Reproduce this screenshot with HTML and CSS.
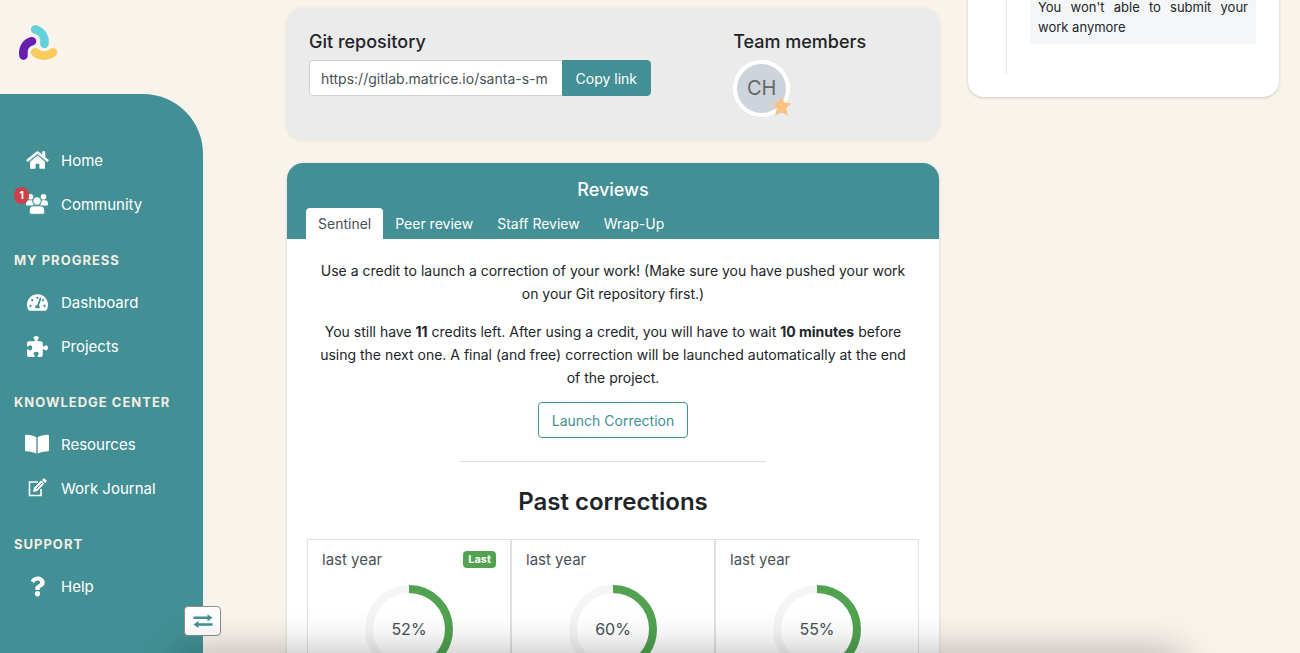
FILE: index.html
```html
<!DOCTYPE html>
<html lang="en">
<head>
<meta charset="utf-8">
<meta name="viewport" content="width=device-width, initial-scale=1">
<title>Project reviews</title>
<link rel="stylesheet" href="styles.css">
</head>
<body>
<div class="shell">
  <aside class="sidebar">
    <a class="brand" href="#" aria-label="Matrice">
      <svg class="logo" viewBox="0 0 40 38" fill="none" stroke-width="8.6" stroke-linecap="round">
        <path stroke="#63d1dc" d="M17.2 5.4C24 7.4 27.3 13.4 26.4 19.7"/>
        <path stroke="#6521ae" d="M14 17.2C7.4 19.2 4.4 24.8 5.5 31.6"/>
        <path stroke="#f9cc5f" d="M17.2 28.4C22.3 32.7 30.3 32.7 35 28.4"/>
      </svg>
    </a>
    <nav class="nav">
      <a class="nav-link" href="#"><span class="nav-icon"><svg width="23" height="20" viewBox="0 0 576 512"><path d="M280.37 148.26L96 300.11V464a16 16 0 0 0 16 16l112.06-.29a16 16 0 0 0 15.92-16V368a16 16 0 0 1 16-16h64a16 16 0 0 1 16 16v95.64a16 16 0 0 0 16 16.05L464 480a16 16 0 0 0 16-16V300L295.67 148.26a12.19 12.19 0 0 0-15.3 0zM571.6 251.47L488 182.56V44.05a12 12 0 0 0-12-12h-56a12 12 0 0 0-12 12v72.61L318.47 43a48 48 0 0 0-61 0L4.34 251.47a12 12 0 0 0-1.6 16.9l25.5 31A12 12 0 0 0 45.15 301l235.22-193.74a12.19 12.19 0 0 1 15.3 0L530.9 301a12 12 0 0 0 16.9-1.6l25.5-31a12 12 0 0 0-1.7-16.93z"/></svg></span>Home</a>
      <a class="nav-link" href="#"><span class="nav-icon"><svg width="22" height="22" viewBox="0 0 22 22"><circle cx="4.5" cy="3.8" r="2.8"/><circle cx="17.5" cy="3.8" r="2.8"/><path d="M3 7.2h2.3c.8 0 1.3.3 1.7.7-.3 2 .2 3.4 1.3 4.7H1.2C.5 12.6 0 12.1 0 11.4V10.200c0-1.700 1.300-3 3-3zM19 7.200h-2.300c-.8 0-1.300.3-1.700.7.3 2-.2 3.400-1.300 4.700h7.100c.7 0 1.200-.5 1.200-1.200v-1.200c0-1.700-1.300-3-3-3z"/><circle class="cutout" cx="11" cy="8" r="4.200"/><path class="cutout" d="M7.500 12.800h7c2.400 0 4.300 1.800 4.300 4.200v2c0 1.300-1 2.300-2.300 2.300h-11c-1.300 0-2.300-1-2.300-2.300v-2c0-2.400 1.900-4.200 4.300-4.200z"/></svg><span class="count">1</span></span>Community</a>

      <h2 class="nav-heading">My progress</h2>
      <a class="nav-link" href="#"><span class="nav-icon"><svg width="21" height="19" viewBox="0 0 576 512"><path d="M288 32C128.94 32 0 160.94 0 320c0 52.8 14.25 102.26 39.06 144.8 5.61 9.62 16.3 15.2 27.44 15.2h443c11.14 0 21.83-5.58 27.44-15.2C561.75 422.26 576 372.8 576 320c0-159.06-128.94-288-288-288zm0 64c14.71 0 26.58 10.13 30.32 23.65-1.11 2.26-2.64 4.23-3.45 6.67l-9.22 27.67c-5.13 3.49-10.97 6.01-17.64 6.01-17.67 0-32-14.33-32-32S270.33 96 288 96zM96 384c-17.67 0-32-14.33-32-32s14.33-32 32-32 32 14.33 32 32-14.33 32-32 32zm48-160c-17.67 0-32-14.33-32-32s14.33-32 32-32 32 14.33 32 32-14.33 32-32 32zm246.77-72.41l-61.33 184C343.13 347.33 352 364.54 352 384c0 11.72-3.38 22.55-8.88 32H232.88c-5.5-9.45-8.88-20.28-8.88-32 0-33.94 26.5-61.43 59.9-63.59l61.34-184.01c4.17-12.56 17.73-19.45 30.36-15.17 12.57 4.19 19.35 17.79 15.17 30.36zm14.66 57.2l15.52-46.55c3.47-1.29 7.13-2.23 11.05-2.23 17.67 0 32 14.33 32 32s-14.33 32-32 32c-11.38-.01-20.89-6.28-26.57-15.22zM480 384c-17.67 0-32-14.33-32-32s14.33-32 32-32 32 14.33 32 32-14.33 32-32 32z"/></svg></span>Dashboard</a>
      <a class="nav-link" href="#"><span class="nav-icon"><svg width="21" height="21" viewBox="0 0 512 512"><path d="M192 104.800c0-9.200-5.800-17.300-13.200-22.800C167.200 73.300 160 61.300 160 48c0-26.500 28.700-48 64-48s64 21.500 64 48c0 13.300-7.200 25.300-18.800 34c-7.400 5.500-13.200 13.600-13.200 22.800c0 12.800 10.400 23.200 23.200 23.200H336c26.500 0 48 21.500 48 48v56.800c0 12.800 10.400 23.200 23.200 23.200c9.200 0 17.300-5.800 22.800-13.200c8.700-11.600 20.700-18.800 34-18.800c26.500 0 48 28.700 48 64s-21.500 64-48 64c-13.300 0-25.300-7.200-34-18.800c-5.500-7.400-13.600-13.200-22.800-13.200c-12.800 0-23.200 10.400-23.200 23.200V464c0 26.500-21.500 48-48 48H279.200c-12.800 0-23.200-10.400-23.200-23.200c0-9.200 5.800-17.300 13.200-22.800c11.600-8.700 18.800-20.700 18.800-34c0-26.500-28.700-48-64-48s-64 21.500-64 48c0 13.300 7.200 25.300 18.800 34c7.400 5.500 13.200 13.600 13.200 22.800c0 12.800-10.400 23.200-23.200 23.200H48c-26.500 0-48-21.500-48-48V343.200C0 330.400 10.400 320 23.200 320c9.200 0 17.300 5.800 22.800 13.200C54.700 344.800 66.700 352 80 352c26.500 0 48-28.700 48-64s-21.500-64-48-64c-13.300 0-25.300 7.200-34 18.800C40.500 250.200 32.400 256 23.200 256C10.400 256 0 245.600 0 232.800V176c0-26.500 21.500-48 48-48H168.800c12.800 0 23.200-10.400 23.200-23.200z"/></svg></span>Projects</a>

      <h2 class="nav-heading">Knowledge center</h2>
      <a class="nav-link" href="#"><span class="nav-icon"><svg width="24" height="22" viewBox="0 0 576 512"><path d="M542.22 32.05c-54.8 3.11-163.72 14.43-230.96 55.59-4.64 2.84-7.27 7.89-7.27 13.17v363.87c0 11.55 12.63 18.85 23.28 13.49 69.18-34.82 169.23-44.32 218.7-46.92 16.89-.89 30.02-14.43 30.02-30.66V62.75c.01-17.71-15.35-31.74-33.77-30.7zM264.73 87.64C197.5 46.48 88.58 35.17 33.78 32.05 15.36 31.01 0 45.04 0 62.75V400.6c0 16.24 13.13 29.78 30.02 30.66 49.49 2.6 149.59 12.11 218.77 46.95 10.62 5.35 23.21-1.94 23.21-13.46V100.63c0-5.29-2.62-10.14-7.27-12.99z"/></svg></span>Resources</a>
      <a class="nav-link" href="#"><span class="nav-icon"><svg width="20" height="20" viewBox="0 0 20 20"><path d="M11 4H2.5v13.5H14V11" fill="none" stroke="currentColor" stroke-width="1.6"/><path d="M6 14l1-4.200 7.200-7.200 3.200 3.200-7.200 7.200zM15 1.900l1-1c.6-.6 1.400-.6 2 0l1.100 1.100c.6.6.6 1.400 0 2l-1 1z"/><path class="slit" d="M9 11l6-6"/></svg></span>Work Journal</a>

      <h2 class="nav-heading">Support</h2>
      <a class="nav-link" href="#"><span class="nav-icon"><svg width="15" height="21" viewBox="0 0 384 512"><path d="M202.021 0C122.202 0 70.503 32.703 29.914 91.026c-7.363 10.58-5.093 25.086 5.178 32.874l43.138 32.709c10.373 7.865 25.132 6.026 33.253-4.148 25.049-31.381 43.63-49.449 82.757-49.449 30.764 0 68.816 19.799 68.816 49.631 0 22.552-18.617 34.134-48.993 51.164-35.423 19.86-82.299 44.576-82.299 106.405V320c0 13.255 10.745 24 24 24h72.471c13.255 0 24-10.745 24-24v-5.773c0-42.86 125.268-44.645 125.268-160.627C377.504 66.256 286.902 0 202.021 0zM192 373.459c-38.196 0-69.271 31.075-69.271 69.271 0 38.195 31.075 69.27 69.271 69.27s69.271-31.075 69.271-69.271-31.075-69.27-69.271-69.27z"/></svg></span>Help</a>
    </nav>
    <button class="toggle" type="button" aria-label="Toggle sidebar">
      <svg width="20" height="16" viewBox="0 0 20 16"><path d="M.5 3.500h14V1.200L19.500 4.700l-5 3.500V6H.5zM19.500 10.300h-14V8L.5 11.500l5 3.500v-2.200h14z"/></svg>
    </button>
  </aside>

  <main class="content">
    <div class="column">
      <section class="card repo">
        <div>
          <h3 class="card-title"><label for="repo-url">Git repository</label></h3>
          <div class="copy-group">
            <input id="repo-url" class="copy-input" type="text" readonly value="https://gitlab.matrice.io/santa-s-m">
            <button class="btn btn-solid" type="button">Copy link</button>
          </div>
        </div>
        <div>
          <h3 class="card-title">Team members</h3>
          <div class="avatar">CH
            <svg class="star" viewBox="0 0 22 22"><path d="M11 1l3 6.500 7 .9-5.200 4.900 1.400 7.200L11 17.400l-6.200 3.100 1.400-7.200L1 8.400l7-.9z"/></svg>
          </div>
        </div>
      </section>

      <section class="card reviews">
        <header class="reviews-head">
          <h3 class="reviews-title">Reviews</h3>
          <div class="tabs" role="tablist">
            <button class="tab active" type="button" role="tab" aria-selected="true">Sentinel</button>
            <button class="tab" type="button" role="tab">Peer review</button>
            <button class="tab" type="button" role="tab">Staff Review</button>
            <button class="tab" type="button" role="tab">Wrap-Up</button>
          </div>
        </header>
        <div class="reviews-body">
          <div class="intro">
            <p>Use a credit to launch a correction of your work! (Make sure you have pushed your work on your Git repository first.)</p>
            <p>You still have <strong>11</strong> credits left. After using a credit, you will have to wait <strong>10 minutes</strong> before using the next one. A final (and free) correction will be launched automatically at the end of the project.</p>
          </div>
          <button class="btn btn-outline" type="button">Launch Correction</button>
          <hr>
          <h2 class="past-title">Past corrections</h2>
          <div class="results">
            <article class="result">
              <div class="result-head"><span>last year</span><span class="badge">Last</span></div>
              <div class="ring"><svg viewBox="0 0 88 88"><circle class="track" cx="44" cy="44" r="40"/><circle class="value" cx="44" cy="44" r="40" pathLength="100" stroke-dasharray="52 48"/></svg><span>52%</span></div>
            </article>
            <article class="result">
              <div class="result-head"><span>last year</span></div>
              <div class="ring"><svg viewBox="0 0 88 88"><circle class="track" cx="44" cy="44" r="40"/><circle class="value" cx="44" cy="44" r="40" pathLength="100" stroke-dasharray="60 40"/></svg><span>60%</span></div>
            </article>
            <article class="result">
              <div class="result-head"><span>last year</span></div>
              <div class="ring"><svg viewBox="0 0 88 88"><circle class="track" cx="44" cy="44" r="40"/><circle class="value" cx="44" cy="44" r="40" pathLength="100" stroke-dasharray="55 45"/></svg><span>55%</span></div>
            </article>
          </div>
        </div>
      </section>
    </div>

    <section class="card timeline">
      <div class="timeline-track">
        <p class="timeline-note">You won't able to submit your work anymore</p>
      </div>
    </section>
  </main>
</div>
<div class="dock-shadow"></div>
</body>
</html>
```
FILE: styles.css
```css
:root {
  --teal: #429095;
  --cream: #f8f3eb;
  --ink: #212529;
  --grey: #495057;
  --green: #51a351;
}

* { box-sizing: border-box; }

body {
  margin: 0;
  height: 100vh;
  overflow: hidden;
  background: var(--cream);
  color: var(--ink);
  font: 14px/23px Inter, "Liberation Sans", sans-serif;
}

h2, h3, p { margin: 0; }
button, input { font: inherit; }
svg { display: block; fill: currentColor; }

.shell {
  display: flex;
  height: 100vh;
  overflow: hidden;
}

/* Sidebar */
.sidebar {
  position: relative;
  flex: none;
  width: 203px;
  display: flex;
  flex-direction: column;
}

.brand {
  flex: none;
  height: 94px;
  padding: 24px 18px;
}

.logo { width: 40px; height: 38px; fill: none; }

.nav {
  flex: 1;
  padding-top: 44px;
  background: var(--teal);
  border-radius: 0 60px 0 0;
}

.nav-link {
  display: flex;
  align-items: center;
  gap: 12px;
  height: 44px;
  padding-left: 25px;
  color: #fff;
  font-size: 15px;
  text-decoration: none;
}

.nav-icon {
  position: relative;
  display: flex;
  justify-content: center;
  width: 24px;
}

.cutout { stroke: var(--teal); stroke-width: 1; }
.slit { stroke: var(--teal); stroke-width: 1; }

.count {
  position: absolute;
  top: -6px;
  left: -11px;
  width: 15px;
  height: 17px;
  border-radius: 8px;
  background: #cf404a;
  font-size: 11px;
  font-weight: 700;
  line-height: 17px;
  text-align: center;
}

.nav-heading {
  margin: 23px 0 9px 14px;
  color: #f3ede2;
  font-size: 13px;
  font-weight: 700;
  line-height: 22px;
  letter-spacing: 1px;
  text-transform: uppercase;
}

.toggle {
  position: absolute;
  right: -18px;
  bottom: 17px;
  display: grid;
  place-items: center;
  width: 37px;
  height: 30px;
  padding: 0;
  border: 1px solid #8d8d8d;
  border-radius: 4px;
  background: #fff;
  color: var(--teal);
}

/* Content */
.content {
  flex: 1;
  display: grid;
  grid-template-columns: 652fr 311fr;
  align-items: start;
  gap: 29px;
  padding: 0 21px 0 84px;
}

.card {
  border-radius: 16px;
  background: #fff;
  box-shadow: 0 1px 3px rgba(60, 50, 30, 0.2);
}

.card-title {
  margin-bottom: 6px;
  font-size: 18px;
  font-weight: 500;
  line-height: 24px;
}

.repo {
  display: grid;
  grid-template-columns: 30fr 13fr;
  margin-top: 8px;
  padding: 22px;
  background: #ebebeb;
  box-shadow: 0 1px 4px rgba(60, 50, 30, 0.1);
}

.copy-group {
  display: flex;
  max-width: 342px;
}

.copy-input {
  flex: 1;
  min-width: 0;
  height: 36px;
  padding: 0 11px;
  border: 1px solid #ced4da;
  border-right: 0;
  border-radius: 4px 0 0 4px;
  background: #fff;
  color: var(--grey);
}

.btn {
  height: 36px;
  padding: 0 13px;
  border: 1px solid var(--teal);
  border-radius: 4px;
}

.btn-solid {
  flex: none;
  border-radius: 0 4px 4px 0;
  background: var(--teal);
  color: #fff;
}

.btn-outline { background: #fff; color: var(--teal); }

.avatar {
  position: relative;
  display: grid;
  place-items: center;
  width: 57px;
  height: 57px;
  border: 4px solid #fff;
  border-radius: 50%;
  background: #ced4dc;
  color: #666;
  font-size: 20px;
}

.star {
  position: absolute;
  right: -7px;
  bottom: -4px;
  width: 23px;
  height: 22px;
  fill: #f8c284;
}

/* Reviews */
.reviews {
  margin-top: 24px;
  overflow: hidden;
}

.reviews-head {
  padding: 15px 19px 0;
  background: var(--teal);
  color: #fff;
}

.reviews-title {
  margin-bottom: 6px;
  font-size: 18px;
  font-weight: 500;
  line-height: 24px;
  text-align: center;
}

.tabs { display: flex; }

.tab {
  height: 31px;
  padding: 0 12px;
  border: 0;
  border-radius: 4px 4px 0 0;
  background: none;
  color: #fff;
}

.tab.active { background: #fff; color: var(--grey); }

.reviews-body {
  display: flex;
  flex-direction: column;
  align-items: center;
  padding: 20px;
  text-align: center;
}

.intro {
  padding: 0 8px;
  margin-bottom: 13px;
}

.intro p + p { margin-top: 15px; }

.reviews-body hr {
  width: 50%;
  margin: 23px 0;
  border: 0;
  border-top: 1px solid #dedede;
}

.past-title {
  margin-bottom: 20px;
  font-size: 24px;
  font-weight: 600;
  line-height: 34px;
}

.results {
  display: grid;
  grid-template-columns: repeat(3, 1fr);
  align-self: stretch;
}

.result {
  padding: 8px 14px 20px;
  border: 1px solid #dee2e6;
  color: var(--grey);
}

.result-head {
  display: flex;
  justify-content: space-between;
  align-items: center;
  margin-bottom: 14px;
  font-size: 15px;
}

.badge {
  padding: 0 5px;
  border-radius: 4px;
  background: var(--green);
  color: #fff;
  font-size: 11px;
  font-weight: 700;
  line-height: 17px;
}

.ring {
  display: grid;
  place-items: center;
  font-size: 16px;
}

.ring > * { grid-area: 1 / 1; }

.ring svg {
  width: 88px;
  height: 88px;
  fill: none;
  stroke-width: 8;
  transform: rotate(-90deg);
}

.track { stroke: #f5f5f5; }
.value { stroke: var(--green); }

/* Timeline */
.timeline {
  padding: 0 23px 23px 38px;
  margin-top: -3px;
  border-radius: 0 0 16px 16px;
}

.timeline-track {
  padding: 0 0 30px 23px;
  border-left: 1px solid #dee2e6;
}

.timeline-note {
  padding: 0 8px 7px;
  border-radius: 0 0 4px 4px;
  background: #f5f6f8;
  font-size: 13px;
  line-height: 20px;
  text-align: justify;
}

.dock-shadow {
  position: fixed;
  top: 100%;
  left: 180px;
  right: 120px;
  height: 80px;
  box-shadow: 0 0 40px rgba(0, 0, 0, 0.3);
  pointer-events: none;
}
```
